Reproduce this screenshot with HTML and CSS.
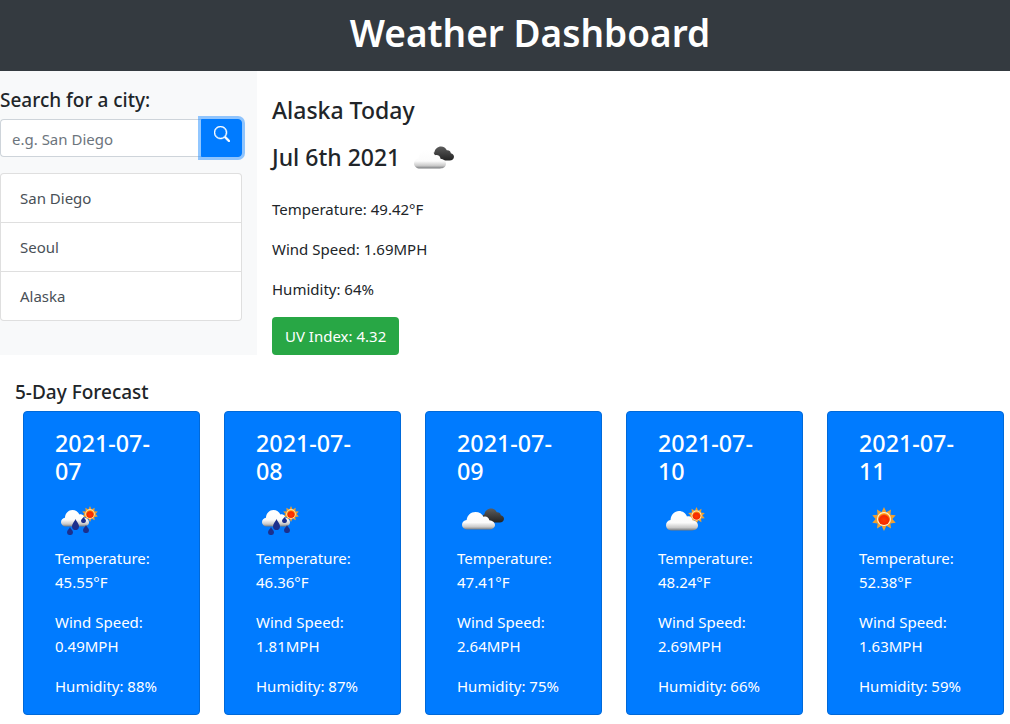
FILE: index.html
```html
<!DOCTYPE html>
<html lang="en">
<head>
  <meta charset="UTF-8" />
  <meta name="viewport" content="width=device-width,initial-scale=1.0" />
  <title>Weather Dashboard</title>
  <link rel="stylesheet" href="styles.css">
</head>
<body>
  <svg class="defs" width="0" height="0" aria-hidden="true">
    <defs>
      <linearGradient id="white" x1="0" y1="0" x2="0" y2="1">
        <stop offset="0" stop-color="#ffffff"/>
        <stop offset=".6" stop-color="#fbfbfb"/>
        <stop offset=".85" stop-color="#c9c9c9"/>
        <stop offset="1" stop-color="#77797c"/>
      </linearGradient>
      <linearGradient id="dark" x1="0" y1="0" x2="0" y2="1">
        <stop offset="0" stop-color="#5c5c5c"/>
        <stop offset="1" stop-color="#232323"/>
      </linearGradient>
      <radialGradient id="sun" cx=".5" cy=".6" r=".55">
        <stop offset="0" stop-color="#ff3a00"/>
        <stop offset=".7" stop-color="#f52a00"/>
        <stop offset="1" stop-color="#ffb020"/>
      </radialGradient>
      <symbol id="sunburst" viewBox="0 0 24 24" preserveAspectRatio="none">
        <path fill="#f0a030" d="M12 0l2.400 5.200L19 2.500l-.6 5.200 5.300.6-3.300 3.700 3.300 3.800-5.300.6.600 5.100-4.600-2.700L12 24l-2.400-5.200L5 21.500l.6-5.100-5.300-.6 3.300-3.800L.3 8.300l5.300-.6L5 2.500l4.600 2.700z"/>
        <circle cx="12" cy="12" r="7" fill="#fff3d8"/>
        <circle cx="12" cy="12" r="6" fill="url(#sun)"/>
      </symbol>
      <symbol id="cloud" viewBox="0 0 32 20" preserveAspectRatio="none">
        <path fill="url(#white)" d="M6 19.500C2.500 19.500 0 17.400 0 14.500c0-2.600 2-4.600 4.500-4.900C5 4.500 8.500 1 13 1c3.700 0 6.700 2.100 8 5.200 1.200-.5 2.900-.4 4 .6 1 .9 1.400 2 1.500 3 3 .3 5.500 2.200 5.500 5 0 2.900-2.500 4.700-6 4.700z"/>
      </symbol>
      <symbol id="cloud-dark" viewBox="0 0 24 15" preserveAspectRatio="none">
        <path fill="url(#dark)" d="M5 14.500C2 14.500 0 13 0 10.500 0 8.300 1.600 6.800 3.500 6.500 4 3 7 .5 10.500.5c2.700 0 5 1.400 6 3.700 2-.4 4 1 4.200 3C22.500 7.600 24 9 24 10.800c0 2.300-2 3.700-4.500 3.700z"/>
      </symbol>
      <symbol id="drop" viewBox="0 0 8 11" preserveAspectRatio="none">
        <path fill="#1c2f8c" d="M4 0c.5 2 4 4.600 4 7.100A4 4 0 0 1 0 7.100C0 4.600 3.500 2 4 0z"/>
      </symbol>
    </defs>
  </svg>

  <header class="top-bar">
    <h1>Weather Dashboard</h1>
  </header>

  <div class="today-row">
    <aside class="sidebar">
      <label class="search-label" for="city">Search for a city:</label>
      <div class="search-group">
        <input type="text" id="city" placeholder="e.g. San Diego" />
        <button type="button" class="search-btn" aria-label="Search">
          <svg viewBox="0 0 16 16" width="16" height="16" fill="currentColor" stroke="currentColor" stroke-width=".5">
            <path d="M11.742 10.344a6.500 6.500 0 1 0-1.397 1.398h-.001c.03.04.062.078.098.115l3.850 3.850a1 1 0 0 0 1.415-1.414l-3.850-3.850a1.007 1.007 0 0 0-.115-.100zM12 6.500a5.500 5.500 0 1 1-11 0 5.500 5.500 0 0 1 11 0z"/>
          </svg>
        </button>
      </div>
      <ul class="city-list">
        <li>San Diego</li>
        <li>Seoul</li>
        <li>Alaska</li>
      </ul>
    </aside>

    <main class="today">
      <h2>Alaska Today</h2>
      <div class="today-date">
        <h2>Jul 6th 2021</h2>
        <svg class="icon-large" viewBox="0 0 50 50" width="50" height="50">
          <use href="#cloud-dark" x="22" y="14" width="23" height="15"/>
          <use href="#cloud" x="5" y="17" width="32" height="20"/>
        </svg>
      </div>
      <p>Temperature: 49.42°F</p>
      <p>Wind Speed: 1.69MPH</p>
      <p>Humidity: 64%</p>
      <span class="uv-badge">UV Index: 4.32</span>
    </main>
  </div>

  <h3 class="forecast-title">5-Day Forecast</h3>
  <section class="forecast">
    <article class="day-card">
      <h4>2021-07-07</h4>
      <svg class="icon" viewBox="0 0 50 50" width="50" height="50">
        <use href="#sunburst" x="27" y="8" width="16" height="16"/>
        <use href="#cloud" x="6" y="11" width="28" height="18"/>
        <use href="#drop" x="12" y="29" width="6" height="8"/>
        <use href="#drop" x="17" y="21" width="7" height="11"/>
        <use href="#drop" x="26" y="19" width="5" height="6"/>
        <use href="#drop" x="28" y="27" width="6" height="8"/>
      </svg>
      <p>Temperature: 45.55°F</p>
      <p>Wind Speed: 0.49MPH</p>
      <p>Humidity: 88%</p>
    </article>
    <article class="day-card">
      <h4>2021-07-08</h4>
      <svg class="icon" viewBox="0 0 50 50" width="50" height="50">
        <use href="#sunburst" x="27" y="8" width="16" height="16"/>
        <use href="#cloud" x="6" y="11" width="28" height="18"/>
        <use href="#drop" x="12" y="29" width="6" height="8"/>
        <use href="#drop" x="17" y="21" width="7" height="11"/>
        <use href="#drop" x="26" y="19" width="5" height="6"/>
        <use href="#drop" x="28" y="27" width="6" height="8"/>
      </svg>
      <p>Temperature: 46.36°F</p>
      <p>Wind Speed: 1.81MPH</p>
      <p>Humidity: 87%</p>
    </article>
    <article class="day-card">
      <h4>2021-07-09</h4>
      <svg class="icon" viewBox="0 0 50 50" width="50" height="50">
        <use href="#cloud-dark" x="24" y="10" width="23" height="15"/>
        <use href="#cloud" x="5" y="13" width="33" height="19"/>
      </svg>
      <p>Temperature: 47.41°F</p>
      <p>Wind Speed: 2.64MPH</p>
      <p>Humidity: 75%</p>
    </article>
    <article class="day-card">
      <h4>2021-07-10</h4>
      <svg class="icon" viewBox="0 0 50 50" width="50" height="50">
        <use href="#sunburst" x="30" y="9" width="17" height="17"/>
        <use href="#cloud" x="8" y="12" width="32" height="21"/>
      </svg>
      <p>Temperature: 48.24°F</p>
      <p>Wind Speed: 2.69MPH</p>
      <p>Humidity: 66%</p>
    </article>
    <article class="day-card">
      <h4>2021-07-11</h4>
      <svg class="icon" viewBox="0 0 50 50" width="50" height="50">
        <use href="#sunburst" x="13" y="9" width="24" height="24"/>
      </svg>
      <p>Temperature: 52.38°F</p>
      <p>Wind Speed: 1.63MPH</p>
      <p>Humidity: 59%</p>
    </article>
  </section>
</body>
</html>
```

FILE: styles.css
```css
*{box-sizing:border-box;}
html,body{overflow:hidden;}
body{
  margin:0;
  height:724px;
  font-family:"Noto Sans","Open Sans",sans-serif;
  font-size:15px;
  line-height:24px;
  color:#212529;
  background:#fff;
}
.defs{position:absolute;}

.top-bar{
  height:71px;
  padding-left:50px;
  background:#343a40;
  color:#fff;
  text-align:center;
}
.top-bar h1{margin:0;font-size:37px;line-height:65px;font-weight:600;}

.today-row{display:flex;height:284px;}
.sidebar{width:257px;background:#f8f9fa;padding:17px 15px 0 0;}
.search-label{display:block;font-size:19px;font-weight:500;line-height:24px;margin-bottom:7px;}
.search-group{display:flex;height:38px;}
.search-group input{
  flex:1;min-width:0;
  padding:2px 12px 0 11px;
  font:inherit;color:#495057;
  background:#fff;
  border:1px solid #ced4da;
  border-right:none;
  border-radius:4px 0 0 4px;
}
.search-group input::placeholder{color:#6c757d;opacity:1;}
.search-btn{
  width:41px;
  padding:0 0 6px;
  color:#fff;
  background:#007bff;
  border:1px solid #007bff;
  border-radius:0 4px 4px 0;
  box-shadow:0 0 0 3px rgba(38,143,255,.5);
}
.city-list{
  list-style:none;
  margin:16px 0 0;
  padding:0;
  background:#fff;
  border:1px solid rgba(0,0,0,.125);
  border-radius:4px;
}
.city-list li{height:48px;padding:12px 19px;color:#495057;}
.city-list li + li{height:49px;border-top:1px solid rgba(0,0,0,.125);}

.today{flex:1;padding:25px 15px 0;}
.today h2{margin:0;font-size:23px;line-height:29px;font-weight:500;}
.today-date{display:flex;align-items:center;gap:9px;height:50px;margin:7px 0 15px;}
.today p{margin:0 0 16px;}
.uv-badge{
  display:inline-block;
  height:38px;
  padding:7px 13px;
  color:#fff;
  background:#28a745;
  border-radius:4px;
}

.forecast-title{margin:0;padding:25px 0 7px 15px;font-size:19px;line-height:24px;font-weight:500;}
.forecast{display:flex;gap:24px;padding-left:23px;}
.day-card{
  width:177px;
  height:304px;
  padding:17px 31px;
  color:#fff;
  background:#007bff;
  border:1px solid #0069d9;
  border-radius:4px;
}
.day-card h4{margin:0;font-size:23.3px;line-height:28px;font-weight:500;}
.day-card .icon{display:block;margin:13px 0 0;}
.day-card p{margin:0 0 16px;}
.day-card .icon + p{margin-top:-2px;}
```
